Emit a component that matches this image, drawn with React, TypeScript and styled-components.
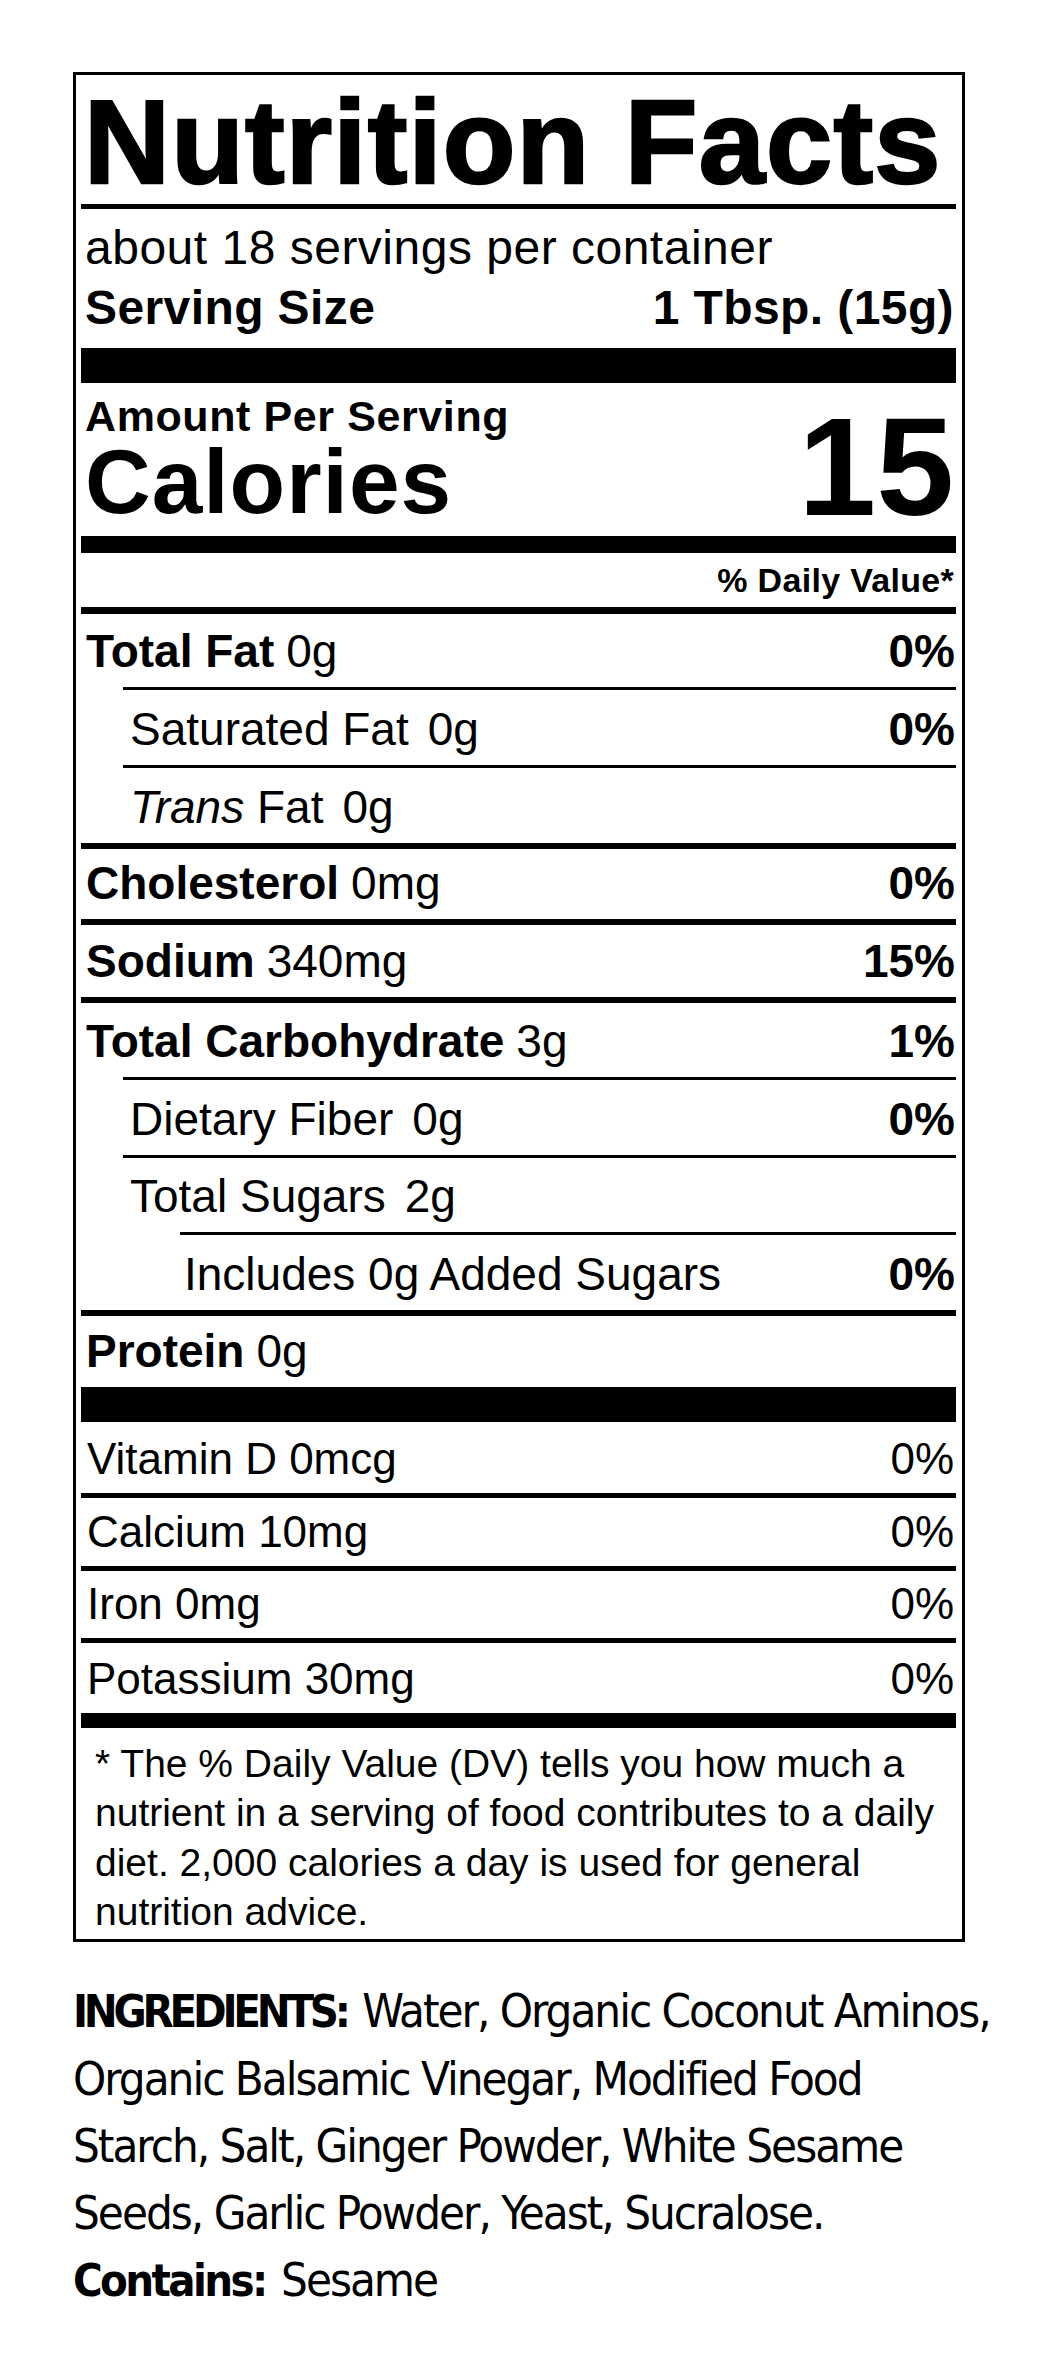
import React from "react";
import styled, { createGlobalStyle } from "styled-components";

const GlobalStyle = createGlobalStyle`
  html, body { margin: 0; padding: 0; background: #ffffff; }
  body {
    font-family: "Liberation Sans", Arial, Helvetica, sans-serif;
    color: #000000;
  }
  *, *::before, *::after { box-sizing: border-box; }
`;

const Page = styled.main`
  padding: 72px 0 0 73px;
  min-height: 2355px;
`;

const Label = styled.section`
  width: 892px;
  border: 3px solid #000;
  padding: 0 6px 3px 5px;
`;

const Title = styled.h1`
  margin: 0;
  padding: 7px 0 0 3px;
  font-size: 119px;
  line-height: 120px;
  font-weight: 700;
  letter-spacing: 1.2px;
  -webkit-text-stroke: 2.5px #000;
  white-space: nowrap;
`;

const Bar = styled.div<{ $h: number; $mt?: number }>`
  height: ${(p) => p.$h}px;
  margin-top: ${(p) => p.$mt ?? 0}px;
  background: #000;
`;

const Servings = styled.p`
  margin: 9px 0 0 4px;
  font-size: 48px;
  line-height: 60px;
  letter-spacing: 0.5px;
  white-space: nowrap;
`;

const ServingSize = styled.div`
  display: flex;
  justify-content: space-between;
  padding: 0 2px 0 4px;
  font-size: 48px;
  line-height: 60px;
  font-weight: 700;
  letter-spacing: 0.4px;
  white-space: nowrap;
`;

const CaloriesSection = styled.div`
  display: flex;
  justify-content: space-between;
  align-items: flex-end;
  padding: 11px 2px 11px 4px;
`;

const CaloriesLeft = styled.div`
  display: flex;
  flex-direction: column;
`;

const AmountPer = styled.div`
  font-size: 43px;
  line-height: 44px;
  font-weight: 700;
  letter-spacing: 0.6px;
  white-space: nowrap;
`;

const CaloriesWord = styled.div`
  font-size: 91px;
  line-height: 87px;
  font-weight: 700;
  letter-spacing: 1px;
  white-space: nowrap;
`;

const CaloriesValue = styled.div`
  font-size: 140px;
  line-height: 117px;
  font-weight: 700;
`;

const DailyValueHead = styled.div`
  margin-top: 7px;
  padding-right: 2px;
  text-align: right;
  font-size: 34px;
  line-height: 40px;
  font-weight: 700;
  letter-spacing: 0.3px;
`;

const indents = [0, 42, 99];
const pads = [5, 7, 4];

const NutrientRow = styled.div<{ $level: number; $rule: number; $h: number }>`
  display: flex;
  justify-content: space-between;
  align-items: flex-end;
  height: ${(p) => p.$h}px;
  margin-left: ${(p) => indents[p.$level]}px;
  border-top: ${(p) => p.$rule}px solid #000;
  padding: 0 1px 13px ${(p) => pads[p.$level]}px;
  font-size: 46px;
  line-height: 46px;
  white-space: nowrap;
`;

const Name = styled.span<{ $bold: boolean }>`
  font-weight: ${(p) => (p.$bold ? 700 : 400)};
`;

const Amount = styled.span<{ $gap: number }>`
  margin-left: ${(p) => p.$gap}px;
  font-weight: 400;
`;

const Percent = styled.span<{ $bold?: boolean }>`
  font-weight: ${(p) => (p.$bold ? 700 : 400)};
`;

const Italic = styled.em`
  font-style: italic;
`;

const VitaminRow = styled.div<{ $rule: number; $h: number }>`
  display: flex;
  justify-content: space-between;
  align-items: flex-end;
  height: ${(p) => p.$h}px;
  border-top: ${(p) => p.$rule}px solid #000;
  padding: 0 2px 12px 6px;
  font-size: 44px;
  line-height: 44px;
  white-space: nowrap;
`;

const Footnote = styled.p`
  margin: 0;
  padding: 11px 0 0 14px;
  font-size: 39px;
  line-height: 49.3px;
  white-space: nowrap;
`;

const Ingredients = styled.p`
  margin: 35px 0 0 0;
  font-family: "Liberation Sans Narrow", "DejaVu Sans Condensed", "Liberation Sans", sans-serif;
  font-stretch: condensed;
  font-size: 47px;
  line-height: 67px;
  letter-spacing: -2px;
  white-space: nowrap;
`;

const IngLabel = styled.strong<{ $spacing: number }>`
  font-size: 45px;
  font-weight: 700;
  letter-spacing: ${(p) => p.$spacing}px;
  margin-right: 4px;
`;

type Nutrient = {
  name: React.ReactNode;
  amount?: string;
  dv?: string;
  level: number;
  rule: number;
  h: number;
};

const nutrients: Nutrient[] = [
  { name: "Total Fat", amount: "0g", dv: "0%", level: 0, rule: 7, h: 80 },
  { name: "Saturated Fat", amount: "0g", dv: "0%", level: 1, rule: 3, h: 78 },
  { name: <><Italic>Trans</Italic> Fat</>, amount: "0g", level: 1, rule: 3, h: 78 },
  { name: "Cholesterol", amount: "0mg", dv: "0%", level: 0, rule: 6, h: 76 },
  { name: "Sodium", amount: "340mg", dv: "15%", level: 0, rule: 6, h: 78 },
  { name: "Total Carbohydrate", amount: "3g", dv: "1%", level: 0, rule: 6, h: 80 },
  { name: "Dietary Fiber", amount: "0g", dv: "0%", level: 1, rule: 3, h: 78 },
  { name: "Total Sugars", amount: "2g", level: 1, rule: 3, h: 77 },
  { name: "Includes 0g Added Sugars", dv: "0%", level: 2, rule: 3, h: 78 },
  { name: "Protein", amount: "0g", level: 0, rule: 6, h: 77 },
];

const vitamins = [
  { name: "Vitamin D 0mcg", dv: "0%", rule: 0, h: 71 },
  { name: "Calcium 10mg", dv: "0%", rule: 5, h: 73 },
  { name: "Iron 0mg", dv: "0%", rule: 5, h: 72 },
  { name: "Potassium 30mg", dv: "0%", rule: 5, h: 75 },
];

export default function App() {
  return (
    <>
      <GlobalStyle />
      <Page>
        <Label>
          <Title>Nutrition Facts</Title>
          <Bar $h={5} $mt={2} />
          <Servings>about 18 servings per container</Servings>
          <ServingSize>
            <span>Serving Size</span>
            <span>1 Tbsp. (15g)</span>
          </ServingSize>
          <Bar $h={35} $mt={10} />
          <CaloriesSection>
            <CaloriesLeft>
              <AmountPer>Amount Per Serving</AmountPer>
              <CaloriesWord>Calories</CaloriesWord>
            </CaloriesLeft>
            <CaloriesValue>15</CaloriesValue>
          </CaloriesSection>
          <Bar $h={17} />
          <DailyValueHead>% Daily Value*</DailyValueHead>
          <div style={{ height: 7 }} />
          {nutrients.map((n, i) => (
            <NutrientRow key={i} $level={n.level} $rule={n.rule} $h={n.h}>
              <span>
                <Name $bold={n.level === 0}>{n.name}</Name>
                {n.amount && <Amount $gap={n.level === 0 ? 12 : 19}>{n.amount}</Amount>}
              </span>
              {n.dv && <Percent $bold>{n.dv}</Percent>}
            </NutrientRow>
          ))}
          <Bar $h={35} />
          {vitamins.map((v, i) => (
            <VitaminRow key={i} $rule={v.rule} $h={v.h}>
              <span>{v.name}</span>
              <Percent>{v.dv}</Percent>
            </VitaminRow>
          ))}
          <Bar $h={15} />
          <Footnote>
            * The % Daily Value (DV) tells you how much a<br />
            nutrient in a serving of food contributes to a daily<br />
            diet. 2,000 calories a day is used for general<br />
            nutrition advice.
          </Footnote>
        </Label>
        <Ingredients>
          <IngLabel $spacing={-4.2}>INGREDIENTS:</IngLabel> Water, Organic Coconut Aminos,<br />
          Organic Balsamic Vinegar, Modified Food<br />
          Starch, Salt, Ginger Powder, White Sesame<br />
          Seeds, Garlic Powder, Yeast, Sucralose.<br />
          <IngLabel $spacing={-2.6}>Contains:</IngLabel> Sesame
        </Ingredients>
      </Page>
    </>
  );
}
